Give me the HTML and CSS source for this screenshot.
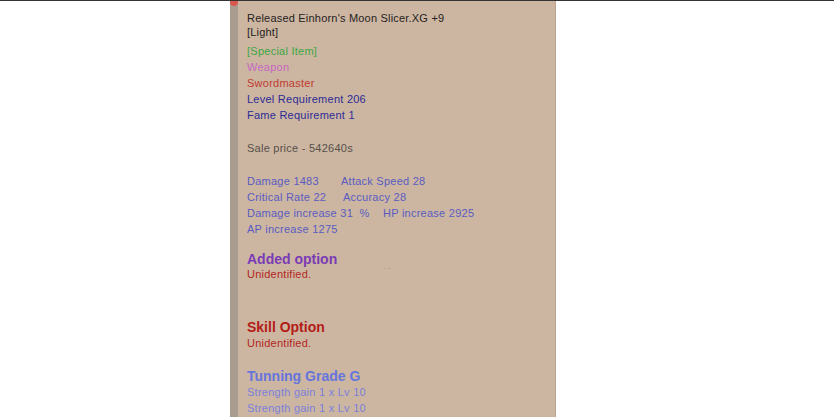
FILE: index.html
```html
<!DOCTYPE html>
<html>
<head>
<meta charset="utf-8">
<link rel="stylesheet" href="styles.css">
</head>
<body>
<div class="page">
  <div class="panel">
    <div class="strip"><span class="dot"></span></div>
    <div class="content">
      <div class="title">Released Einhorn's Moon Slicer.XG +9</div>
      <div class="title">[Light]</div>
      <div class="line green gap4">[Special Item]</div>
      <div class="line magenta">Weapon</div>
      <div class="line red">Swordmaster</div>
      <div class="line navy">Level Requirement 206</div>
      <div class="line navy">Fame Requirement 1</div>
      <div class="line grey gap17">Sale price - 542640s</div>
      <div class="line blue gap17"><span class="c1">Damage 1483</span><span>Attack Speed 28</span></div>
      <div class="line blue"><span class="c2">Critical Rate 22</span><span>Accuracy 28</span></div>
      <div class="line blue"><span class="c3">Damage increase 31 &nbsp;%</span><span>HP increase 2925</span></div>
      <div class="line blue">AP increase 1275</div>
      <div class="head purple gap14">Added option<span class="faint">- -</span></div>
      <div class="sub red2">Unidentified.</div>
      <div class="head red3 gap38">Skill Option</div>
      <div class="sub red2 gap1">Unidentified.</div>
      <div class="head lblue gap18">Tunning Grade G</div>
      <div class="line lblue2">Strength gain 1 x Lv 10</div>
      <div class="line lblue2">Strength gain 1 x Lv 10</div>
    </div>
  </div>
</div>
</body>
</html>
```
FILE: styles.css
```css
html, body {
  margin: 0;
  padding: 0;
  background: #ffffff;
}
body {
  width: 834px;
  height: 417px;
  overflow: hidden;
  border-top: 1px solid #333333;
  box-sizing: border-box;
  font-family: "Liberation Sans", Arial, sans-serif;
  font-size: 11px;
  letter-spacing: 0.25px;
}
.page {
  display: flex;
  height: 416px;
}
.panel {
  margin-left: 230px;
  width: 326px;
  height: 416px;
  display: flex;
  background: #ccb6a1;
  border-right: 1px solid #b8a48f;
  box-sizing: border-box;
}
.strip {
  width: 8px;
  flex: none;
  background: #a99c8f;
  position: relative;
}
.dot {
  position: absolute;
  left: 0;
  top: -3px;
  width: 8px;
  height: 8px;
  border-radius: 50%;
  background: #d9574d;
}
.content {
  padding: 10px 0 0 9px;
  flex: 1;
}
.title {
  line-height: 14px;
  height: 14px;
  color: #262221;
  white-space: nowrap;
  letter-spacing: 0.2px;
}
.line {
  line-height: 16px;
  height: 16px;
  white-space: nowrap;
}
.head {
  font-size: 14px;
  font-weight: bold;
  line-height: 16px;
  height: 16px;
  white-space: nowrap;
  letter-spacing: 0;
}
.sub {
  line-height: 14px;
  height: 14px;
}
.gap1 { margin-top: 1px; }
.gap4 { margin-top: 4px; }
.gap14 { margin-top: 14px; }
.gap17 { margin-top: 17px; }
.gap18 { margin-top: 18px; }
.gap38 { margin-top: 38px; }
.green { color: #3da742; }
.magenta { color: #c866c4; }
.red { color: #c13a30; }
.navy { color: #2b2b96; }
.grey { color: #56504b; }
.blue { color: #5a5cc2; }
.purple { color: #7a3bb5; }
.red2 { color: #b3261f; }
.red3 { color: #b41c18; }
.lblue { color: #6675dd; }
.lblue2 { color: #7b80dc; }
.c1 { display: inline-block; width: 94px; }
.c2 { display: inline-block; width: 96px; }
.c3 { display: inline-block; width: 136px; }
.faint {
  font-size: 8px;
  font-weight: normal;
  color: #a8988a;
  margin-left: 46px;
  vertical-align: -6px;
}
```
